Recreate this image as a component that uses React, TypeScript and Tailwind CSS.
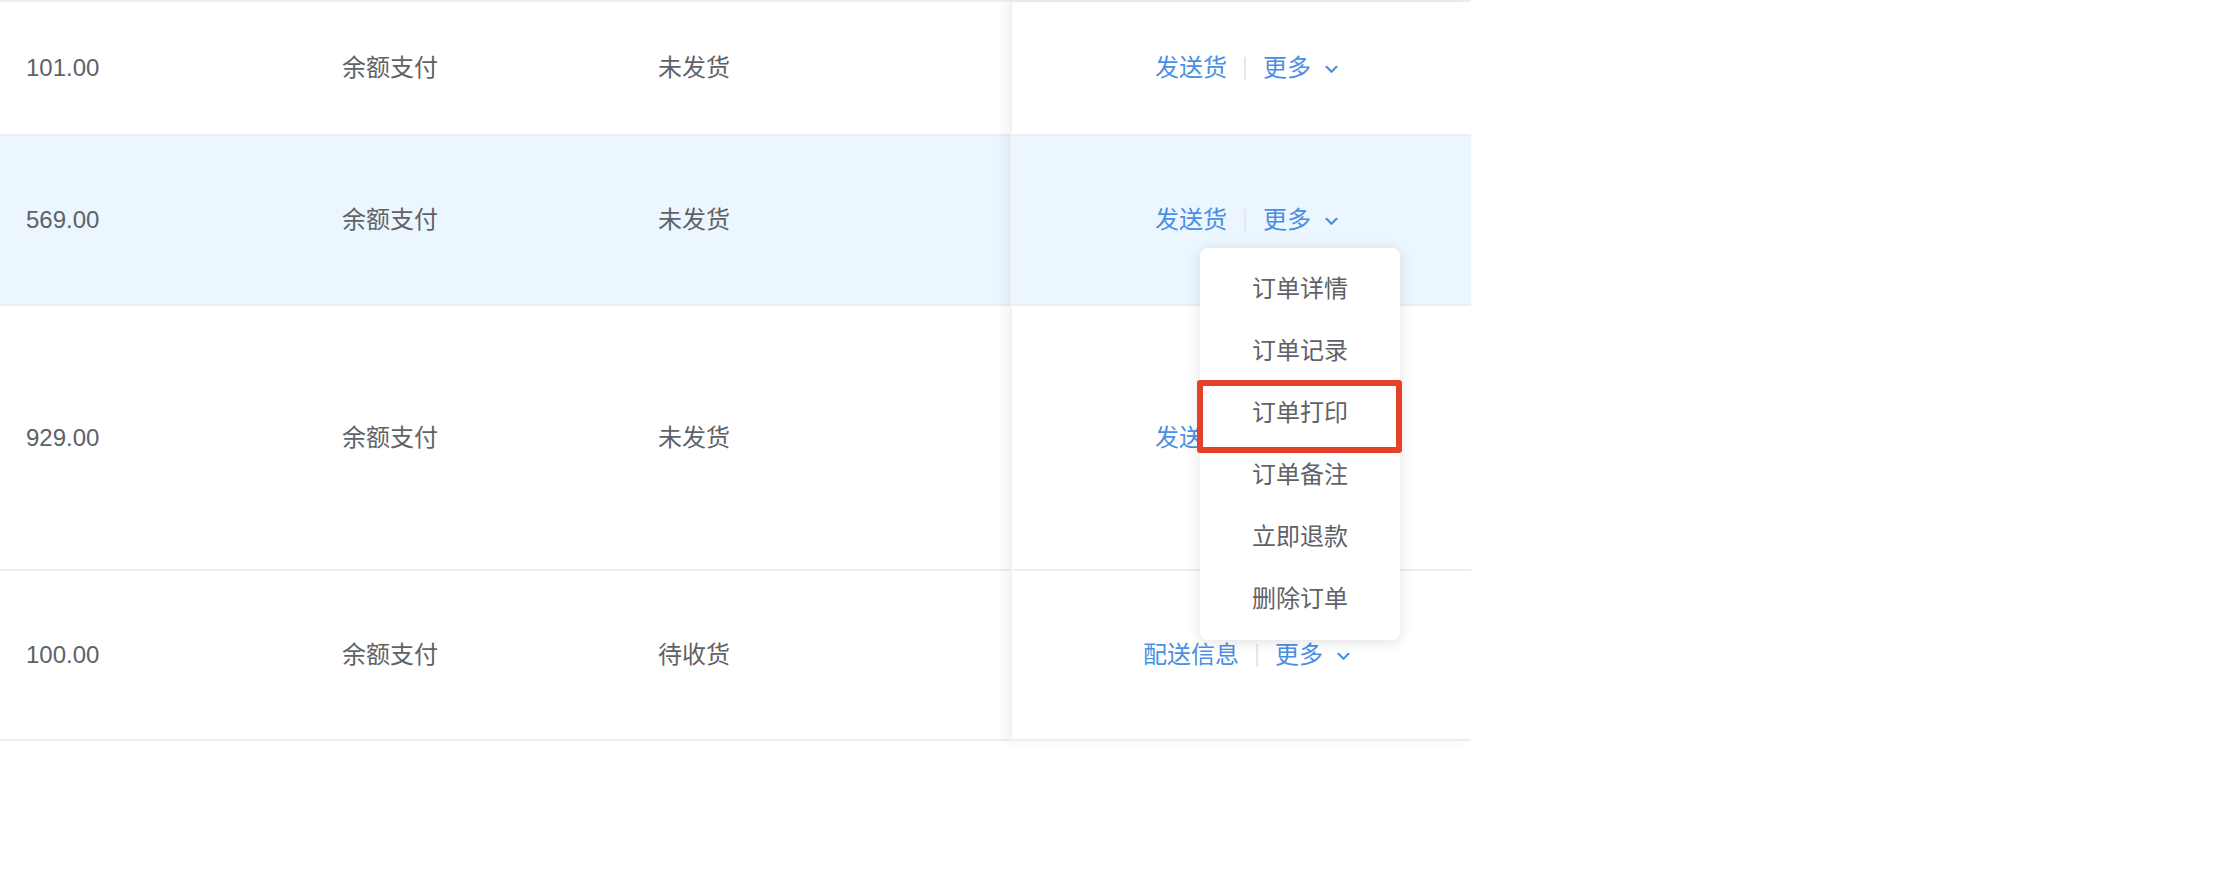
type Row = {
  amount: string
  pay: string
  status: string
  action: string
  h: string
  active?: boolean
}

const rows: Row[] = [
  { amount: "101.00", pay: "余额支付", status: "未发货", action: "发送货", h: "h-[134px]" },
  { amount: "569.00", pay: "余额支付", status: "未发货", action: "发送货", h: "h-[170px]", active: true },
  { amount: "929.00", pay: "余额支付", status: "未发货", action: "发送货", h: "h-[265px]" },
  { amount: "100.00", pay: "余额支付", status: "待收货", action: "配送信息", h: "h-[170px]" },
]

const menuItems = ["订单详情", "订单记录", "订单打印", "订单备注", "立即退款", "删除订单"]

function Chevron() {
  return (
    <svg width="13" height="9" viewBox="0 0 13 9" className="ml-[14px] mt-[2px]">
      <path d="M1.5 1.8 L6.5 6.8 L11.5 1.8" fill="none" stroke="#4a8fe3" strokeWidth="2.2" strokeLinecap="round" strokeLinejoin="round" />
    </svg>
  )
}

export default function App() {
  return (
    <div
      className="relative w-full h-[889px] bg-white overflow-hidden text-[24px] text-[#606266]"
      style={{ fontFamily: '"Liberation Sans", "Noto Sans CJK SC", sans-serif' }}
    >
      <div className="flex w-[1471px] border-t-2 border-[#ebeef5]">
        {/* 主体列 */}
        <div className="flex-1">
          {rows.map((r, i) => (
            <div
              key={i}
              className={`flex items-center border-b-2 border-[#ebeef5] ${r.h} ${r.active ? "bg-[#ecf6fe]" : "bg-white"}`}
            >
              <div className="w-[316px] pl-[26px]">{r.amount}</div>
              <div className="w-[316px] pl-[26px]">{r.pay}</div>
              <div className="w-[316px] pl-[26px]">{r.status}</div>
            </div>
          ))}
        </div>

        {/* 右侧固定操作列 */}
        <div className="w-[461px] border-l-2 border-[#f0f2f5] shadow-[-6px_0_10px_rgba(0,0,0,0.05)] z-10">
          {rows.map((r, i) => (
            <div
              key={i}
              className={`flex items-center justify-center pl-[10px] border-b-2 border-[#ebeef5] ${r.h} ${r.active ? "bg-[#ecf6fe]" : "bg-white"}`}
            >
              <span className="text-[#4a8fe3]">{r.action}</span>
              <span className="mx-[17px] w-[2px] h-[23px] bg-[#e4e7ed]" />
              <span className="text-[#4a8fe3]">更多</span>
              <Chevron />
            </div>
          ))}
        </div>
      </div>

      {/* 下拉菜单 */}
      <div className="absolute left-[1200px] top-[248px] w-[200px] py-[10px] bg-white rounded-[8px] shadow-[0_2px_14px_rgba(0,0,0,0.12)] z-20">
        {menuItems.map((m) => (
          <div key={m} className="h-[62px] flex items-center justify-center text-[#5f6269]">
            {m}
          </div>
        ))}
      </div>

      {/* 标注框 */}
      <div className="absolute left-[1197px] top-[380px] w-[205px] h-[73px] border-[6px] border-[#e5412a] rounded-[3px] z-30" />
    </div>
  )
}
